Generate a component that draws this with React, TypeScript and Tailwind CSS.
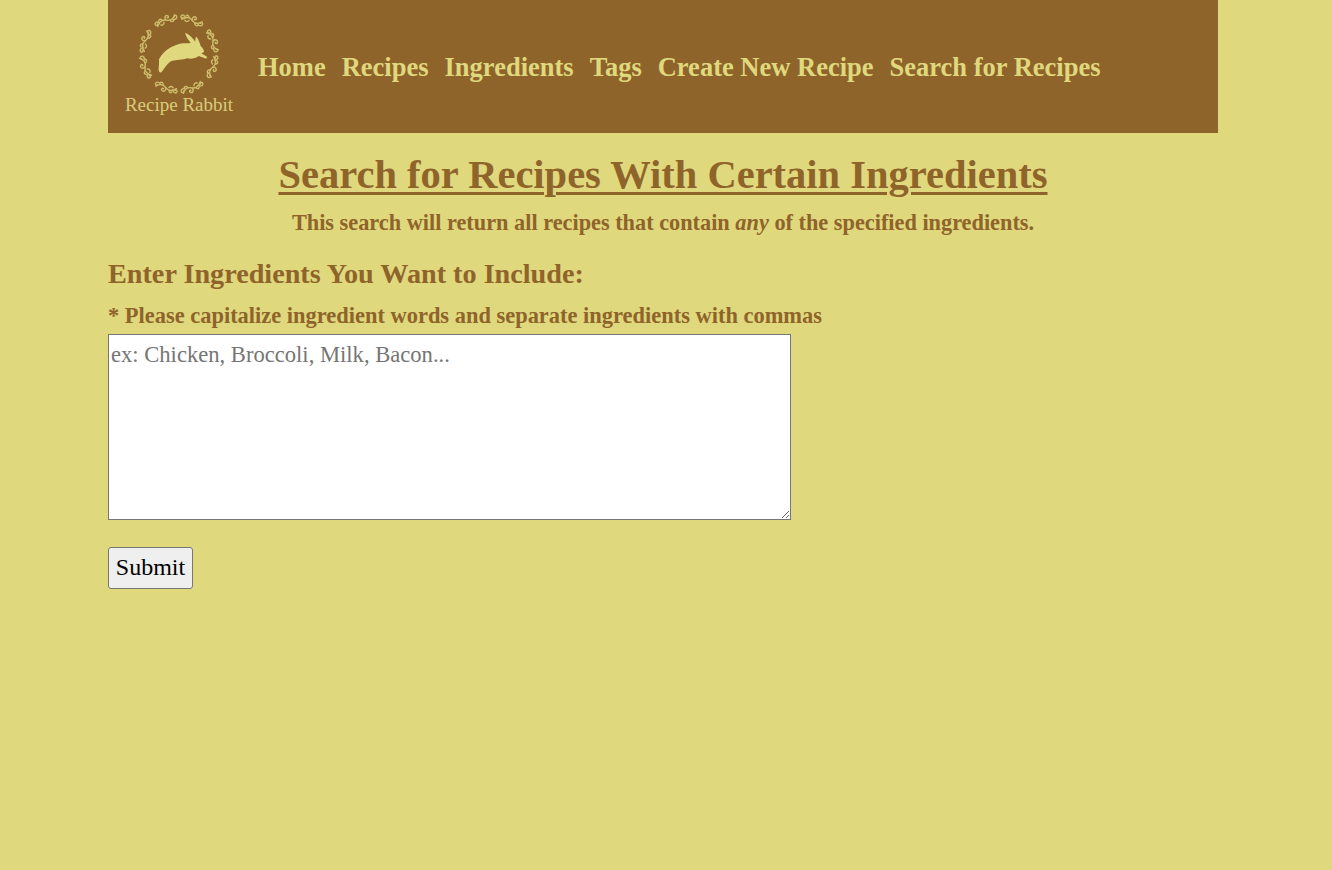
const heading = "font-['Liberation_Serif',serif] font-bold";
const body = "font-['Liberation_Serif',serif]";

const navLinks = ["Home", "Recipes", "Ingredients", "Tags", "Create New Recipe", "Search for Recipes"];

// logo is drawn in 3x units so the shapes line up with a zoomed crop
function Logo() {
  const arcs = [21, 69, 111, 159, 201, 249, 291, 339];
  return (
    <svg width="150" height="133" viewBox="0 0 450 399" className="shrink-0" aria-hidden="true">
      {arcs.map((r) => (
        <g
          key={r}
          transform={`rotate(${r} 213 162)`}
          fill="none"
          stroke="#cdbd6c"
          strokeWidth="4.2"
          strokeLinecap="round"
        >
          <path d="M183 62C193 50 205 48 213 53C222 59 234 59 243 47" />
          <path d="M192 54c-5-8-14-6-14 0c0 5 6 6 7 1" />
          <path d="M213 53c-4-10 4-15 9-11c4 3 1 8-3 6" />
          <path d="M233 57c5 6 14 4 14-3c0-5-6-6-7-1" />
          <path d="M202 49c-3-6-9-6-10-1" />
          <path d="M224 58c2 7 9 8 11 3" />
          <path d="M205 57c-2 6-8 8-12 4" />
        </g>
      ))}
      <path
        d="M153 178C165 155 190 135 225 130C232 130 240 130 248 128C240 118 232 108 232 98C245 103 255 115 262 125C262 118 262 112 265 110C272 118 275 128 278 138C285 145 290 152 287 157L280 160L297 170L295 176L272 168C262 175 250 178 238 175C225 180 205 180 190 183C178 190 170 205 160 217C153 220 150 210 153 195Z"
        fill="#dfd87d"
      />
      <text x="213" y="332" textAnchor="middle" fontSize="57" fontFamily="'Liberation Serif', serif" fill="#d8cd7b">
        Recipe Rabbit
      </text>
    </svg>
  );
}

export default function App() {
  return (
    <div className="min-h-[870px] bg-[#dfd87d] text-[#8f642a]">
      <div className="ml-[108px] w-[1110px]">
        {/* Navbar */}
        <nav className="flex h-[133px] items-center bg-[#8f642a]">
          <Logo />
          <ul className={`flex gap-4 text-[26.5px] leading-8 whitespace-nowrap text-[#dfd87d] ${heading}`}>
            {navLinks.map((label) => (
              <li key={label}>
                <a href="#">{label}</a>
              </li>
            ))}
          </ul>
        </nav>

        {/* Page title */}
        <h1 className={`mt-[18px] text-center text-[40.5px] leading-[48px] underline decoration-[3px] underline-offset-[4px] ${heading}`}>
          Search for Recipes With Certain Ingredients
        </h1>
        <p className={`mt-[9px] text-center text-[22.3px] leading-[30px] font-bold ${body}`}>
          This search will return all recipes that contain <em>any</em> of the specified ingredients.
        </p>

        {/* Form */}
        <form className="mt-[20px]">
          <h3 className={`text-[28.2px] leading-8 ${heading}`}>Enter Ingredients You Want to Include:</h3>
          <label className={`mt-[11px] block text-[22.45px] leading-[30px] font-bold ${body}`}>
            * Please capitalize ingredient words and separate ingredients with commas
          </label>
          <textarea
            placeholder="ex: Chicken, Broccoli, Milk, Bacon..."
            className={`mt-[3px] block h-[186px] w-[683px] resize border border-[#767676] bg-white px-[2px] pt-[5px] pb-[2px] text-[22.6px] leading-[29px] text-black placeholder:text-[#757575] ${body}`}
          />
          <button
            type="button"
            className={`mt-[27px] block h-[42px] w-[85px] rounded-[3px] border border-[#767676] bg-[#efefef] pb-[2px] text-[24px] leading-none text-black ${body}`}
          >
            Submit
          </button>
        </form>
      </div>
    </div>
  );
}
